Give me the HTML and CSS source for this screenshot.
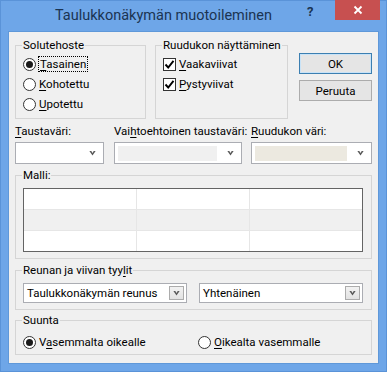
FILE: index.html
```html
<!DOCTYPE html>
<html lang="fi">
<head>
    <meta charset="UTF-8">
    <title>Taulukkonäkymän muotoileminen</title>
    <link rel="stylesheet" href="styles.css">
</head>
<body>
    <div class="window">
        <div class="titlebar">
            <div class="title">Taulukkonäkymän muotoileminen</div>
            <div class="help">?</div>
            <div class="close">
                <svg width="10" height="10" viewBox="0 0 10 10"><path d="M1.5 1.5 L8.5 8.5 M8.5 1.5 L1.5 8.5" stroke="#fff" stroke-width="1.8"/></svg>
            </div>
        </div>

        <div class="client">
            <div class="top-row">
                <fieldset class="group effect">
                    <legend>Solutehoste</legend>
                    <label class="option"><span class="radio checked"></span><span class="focus"><u>T</u>asainen</span></label>
                    <label class="option"><span class="radio"></span><span><u>K</u>ohotettu</span></label>
                    <label class="option"><span class="radio"></span><span><u>U</u>potettu</span></label>
                </fieldset>

                <fieldset class="group lines">
                    <legend>Ruudukon näyttäminen</legend>
                    <label class="option"><span class="check"><svg width="11" height="11" viewBox="0 0 11 11"><path d="M1.5 5.5 L4.2 8.5 L9.5 1.8" fill="none" stroke="#000" stroke-width="1.9"/></svg></span><span><u>V</u>aakaviivat</span></label>
                    <label class="option"><span class="check"><svg width="11" height="11" viewBox="0 0 11 11"><path d="M1.5 5.5 L4.2 8.5 L9.5 1.8" fill="none" stroke="#000" stroke-width="1.9"/></svg></span><span><u>P</u>ystyviivat</span></label>
                </fieldset>

                <div class="buttons">
                    <button class="btn default">OK</button>
                    <button class="btn">Peruuta</button>
                </div>
            </div>

            <div class="colors">
                <div class="field bg">
                    <div class="label"><u>T</u>austaväri:</div>
                    <div class="combo"><span class="swatch white"></span><span class="chevron"></span></div>
                </div>
                <div class="field alt">
                    <div class="label">Vai<u>h</u>toehtoinen taustaväri:</div>
                    <div class="combo"><span class="swatch grey"></span><span class="chevron"></span></div>
                </div>
                <div class="field grid">
                    <div class="label"><u>R</u>uudukon väri:</div>
                    <div class="combo"><span class="swatch beige"></span><span class="chevron"></span></div>
                </div>
            </div>

            <fieldset class="group preview">
                <legend>Malli:</legend>
                <div class="sample">
                    <div class="cell"></div><div class="cell"></div><div class="cell"></div>
                    <div class="cell alt"></div><div class="cell alt"></div><div class="cell alt"></div>
                    <div class="cell"></div><div class="cell"></div><div class="cell"></div>
                </div>
            </fieldset>

            <fieldset class="group styles">
                <legend>Reunan ja viivan tyy<u>l</u>it</legend>
                <div class="style-row">
                    <div class="select"><span>Taulukkonäkymän reunus</span><span class="drop"><span class="chevron"></span></span></div>
                    <div class="select"><span>Yhtenäinen</span><span class="drop"><span class="chevron"></span></span></div>
                </div>
            </fieldset>

            <fieldset class="group direction">
                <legend>Suunta</legend>
                <div class="dir-row">
                    <label class="option ltr"><span class="radio checked"></span><span>V<u>a</u>semmalta oikealle</span></label>
                    <label class="option"><span class="radio"></span><span><u>O</u>ikealta vasemmalle</span></label>
                </div>
            </fieldset>
        </div>
    </div>
</body>
</html>
```

FILE: styles.css
```css
* {
    margin: 0;
    padding: 0;
    box-sizing: border-box;
}

body {
    font-family: Roboto, "Noto Sans", sans-serif;
    font-size: 11.5px;
    color: #000;
    background: #6ea6e8;
}

.window {
    width: 387px;
    height: 372px;
    background: #6ea6e8;
    border: 1px solid #5a93d8;
    padding: 0 7px 7px 7px;
    display: flex;
    flex-direction: column;
}

/* title bar */
.titlebar {
    height: 30px;
    display: flex;
    align-items: flex-start;
}

.title {
    flex: 1;
    padding: 6px 0 0 47px;
    font-size: 14.5px;
    color: #1b3452;
    white-space: nowrap;
}

.help {
    width: 20px;
    margin-top: 3px;
    font-weight: bold;
    font-size: 13px;
    color: #1b3452;
}

.close {
    width: 45px;
    height: 20px;
    margin: -1px -1px 0 8px;
    background: #c75050;
    display: flex;
    align-items: center;
    justify-content: center;
}

/* client area */
.client {
    flex: 1;
    background: #f0f0f0;
    border: 1px solid #5f98d9;
    padding: 6px 6px 0 6px;
    display: flex;
    flex-direction: column;
}

u {
    text-decoration: underline;
    text-underline-offset: 2px;
}

.group {
    border: 1px solid #d5d5d5;
    padding: 0 8px 0 7px;
    min-width: 0;
}

.group legend {
    line-height: 15px;
    padding: 0 1px;
    margin-left: -1px;
    white-space: nowrap;
}

.option {
    display: flex;
    align-items: center;
    height: 20px;
    gap: 3px;
    white-space: nowrap;
}

.radio {
    width: 13px;
    height: 13px;
    border: 1px solid #333;
    border-radius: 50%;
    background: #fff;
    display: flex;
    align-items: center;
    justify-content: center;
    flex-shrink: 0;
}

.radio.checked::after {
    content: "";
    width: 7px;
    height: 7px;
    border-radius: 50%;
    background: #1a1a1a;
}

.check {
    width: 13px;
    height: 13px;
    border: 1px solid #333;
    background: #fff;
    display: flex;
    align-items: center;
    justify-content: center;
    flex-shrink: 0;
}

.focus {
    outline: 1px dotted #000;
    outline-offset: 0;
    padding: 0 1px;
    line-height: 14px;
}

/* top row */
.top-row {
    display: flex;
    align-items: stretch;
}

.effect {
    width: 131px;
    padding-top: 1px;
    padding-bottom: 4px;
}

.lines {
    width: 133px;
    margin-left: 9px;
    padding-top: 1px;
}

.buttons {
    width: 73px;
    margin-left: 11px;
    padding-top: 15px;
    display: flex;
    flex-direction: column;
    gap: 6px;
}

.btn {
    height: 21px;
    font-family: inherit;
    font-size: 11.5px;
    background: #e5e5e5;
    border: 1px solid #acacac;
    color: #000;
}

.btn.default {
    border: 1px solid #3c7fb1;
    box-shadow: inset 0 0 0 1px #c9e3f7;
}

/* colour pickers */
.colors {
    display: flex;
    margin-top: 5px;
    gap: 10px;
}

.field .label {
    line-height: 15px;
    margin-bottom: 3px;
    white-space: nowrap;
}

.field.bg { width: 89px; }
.field.alt { width: 128px; }
.field.grid { width: 121px; margin-left: -1px; }

.combo {
    height: 22px;
    border: 1px solid #abadb3;
    background: #fff;
    display: flex;
    align-items: center;
    padding: 0 3px;
}

.swatch {
    height: 15px;
    flex: 1;
}

.swatch.white { background: #fff; }
.swatch.grey { background: #f0f0f0; }
.swatch.beige { background: #ece9e0; }

.combo .chevron {
    margin: 0 4px 0 10px;
}

.chevron {
    width: 7px;
    height: 5px;
    background: #5a5a5a;
    clip-path: polygon(0 0, 2px 0, 3.5px 2.5px, 5px 0, 7px 0, 3.5px 5px);
    flex-shrink: 0;
}

/* preview */
.preview {
    margin-top: 4px;
    padding-top: 5px;
    padding-bottom: 6px;
}

.sample {
    height: 64px;
    border: 1px solid #646464;
    display: grid;
    grid-template-columns: 113px 113px 1fr;
    grid-template-rows: 21px 21px 1fr;
    background: #fff;
}

.cell {
    border-right: 1px solid #e6e6e6;
    border-bottom: 1px solid #e6e6e6;
}

.cell:nth-child(3n) { border-right: none; }
.cell:nth-child(n+7) { border-bottom: none; }
.cell.alt { background: #f0f0f0; }

/* line styles */
.styles {
    margin-top: 4px;
    padding-top: 5px;
    padding-bottom: 6px;
}

.style-row {
    display: flex;
    gap: 12px;
}

.select {
    flex: 1;
    height: 20px;
    border: 1px solid #abadb3;
    background: #fff;
    display: flex;
    align-items: center;
    justify-content: space-between;
    padding: 0 1px 0 3px;
    white-space: nowrap;
}

.drop {
    width: 15px;
    height: 14px;
    border: 1px solid #acacac;
    background: linear-gradient(#f2f2f2, #e2e2e2);
    display: flex;
    align-items: center;
    justify-content: center;
    margin-right: 1px;
}

/* direction */
.direction {
    margin-top: 3px;
    padding-top: 4px;
    padding-bottom: 2px;
}

.dir-row {
    display: flex;
}

.ltr {
    width: 175px;
}
```
